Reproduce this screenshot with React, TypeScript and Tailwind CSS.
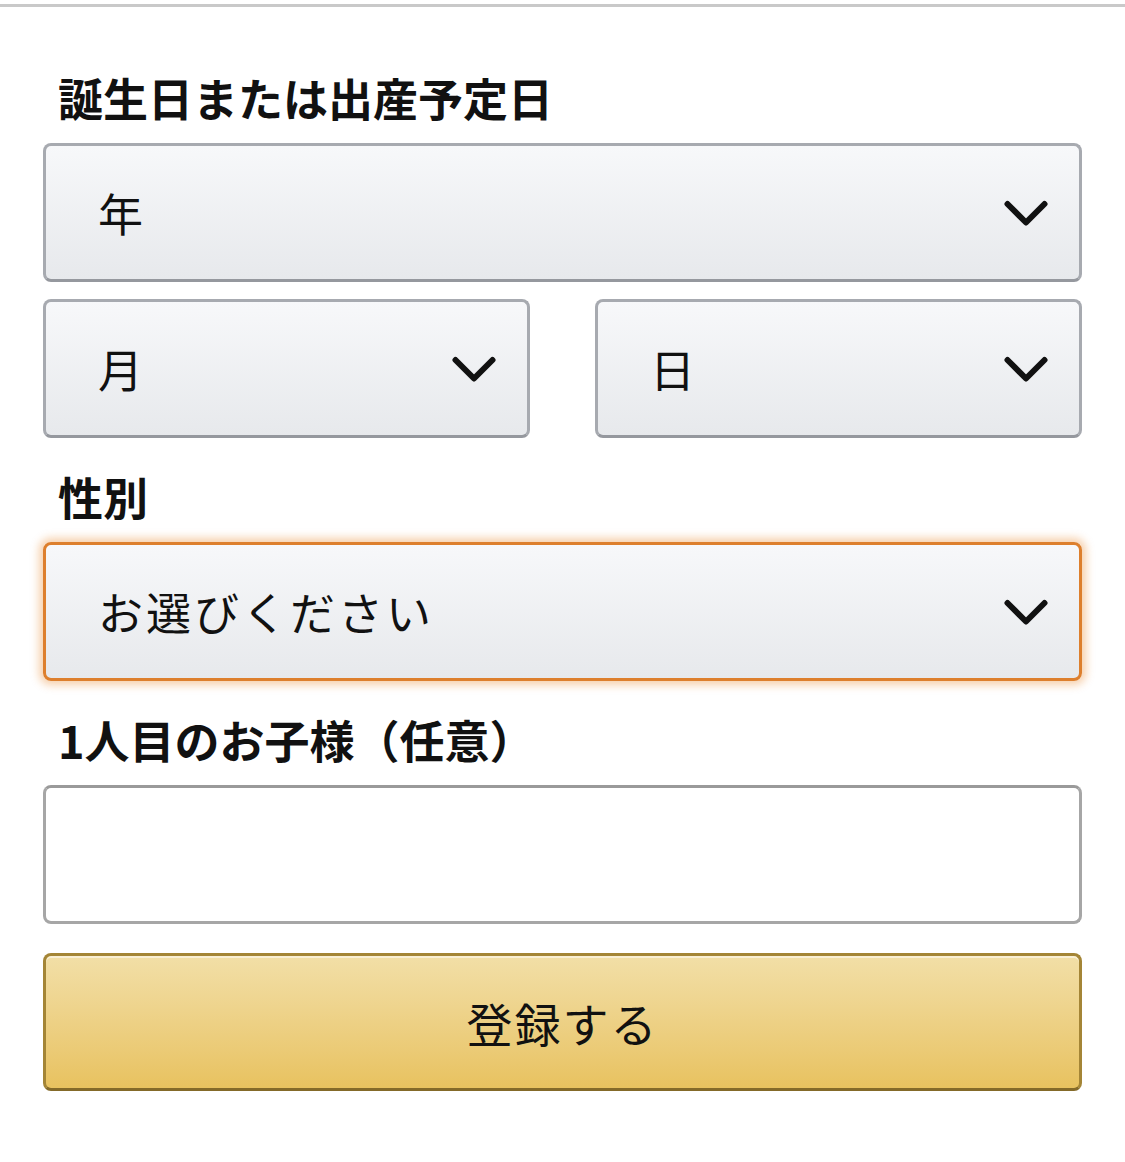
const jp = "font-['Hiragino_Sans','Noto_Sans_CJK_JP',sans-serif]";

function Chevron() {
  return (
    <svg width="44" height="28" viewBox="0 0 44 28" fill="none" aria-hidden>
      <path d="M3.5 5 L22 23.5 L40.5 5" stroke="#111" strokeWidth="6" strokeLinecap="round" strokeLinejoin="round" />
    </svg>
  );
}

function Select({ label, focus = false }: { label: string; focus?: boolean }) {
  return (
    <div
      className={`flex h-[139px] w-full items-center justify-between rounded-[8px] border-[3px] bg-gradient-to-b from-[#f7f8fa] to-[#e7e9ec] pl-[52px] pr-[31px] ${
        focus
          ? "border-[#dd7f2d] shadow-[0_0_8px_4px_rgba(228,121,17,0.35)]"
          : "border-[#a7aab0] border-b-[#95989e]"
      }`}
    >
      <span className="text-[45px] leading-none tracking-[3px] text-[#111]">{label}</span>
      <Chevron />
    </div>
  );
}

function Label({ children }: { children: React.ReactNode }) {
  return (
    <div className="mt-[33px] pl-[15px] text-[45px] font-bold leading-[52px] text-[#111] first:mt-0">
      {children}
    </div>
  );
}

export default function App() {
  return (
    <div className={`min-h-[1162px] w-[1125px] bg-white ${jp}`}>
      <div className="mt-[4px] h-[3px] bg-[#c9c9c9]" />
      <div className="px-[43px] pt-[65px]">
        <Label>誕生日または出産予定日</Label>
        <div className="mt-[19px]">
          <Select label="年" />
        </div>
        <div className="mt-[17px] grid grid-cols-2 gap-[65px]">
          <Select label="月" />
          <Select label="日" />
        </div>

        <Label>性別</Label>
        <div className="mt-[19px]">
          <Select label="お選びください" focus />
        </div>

        <Label>1人目のお子様（任意）</Label>
        <input
          type="text"
          className="mt-[19px] block h-[139px] w-full rounded-[8px] border-[3px] border-[#a6a6a6] border-t-[#9a9a9a] bg-white px-[20px] text-[45px] outline-none"
        />

        <button
          type="button"
          className="mt-[29px] flex h-[138px] w-full items-center justify-center rounded-[8px] border-[3px] border-[#a48536] border-b-[#846a29] bg-gradient-to-b from-[#f2dfa7] to-[#e8c25f] text-[46px] tracking-[2px] text-[#111] shadow-[inset_0_2px_0_rgba(255,255,255,0.5)]"
        >
          登録する
        </button>
      </div>
    </div>
  );
}
